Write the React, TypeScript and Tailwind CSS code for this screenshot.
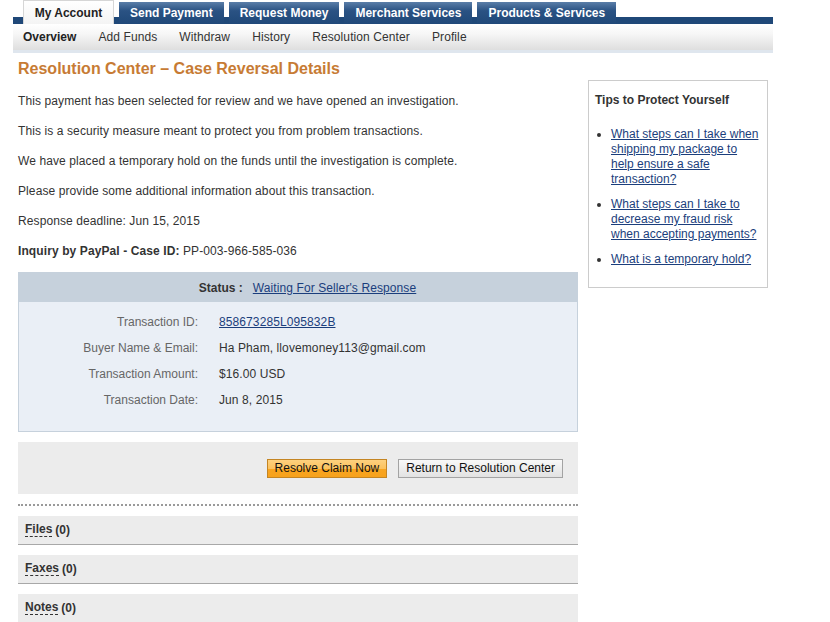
export default function App() {
  const tabs = ["Send Payment", "Request Money", "Merchant Services", "Products & Services"];
  const sub = ["Add Funds", "Withdraw", "History", "Resolution Center", "Profile"];
  const rows: [string, string, boolean][] = [
    ["Transaction ID:", "858673285L095832B", true],
    ["Buyer Name & Email:", "Ha Pham, llovemoney113@gmail.com", false],
    ["Transaction Amount:", "$16.00 USD", false],
    ["Transaction Date:", "Jun 8, 2015", false],
  ];
  const tips = [
    "What steps can I take when shipping my package to help ensure a safe transaction?",
    "What steps can I take to decrease my fraud risk when accepting payments?",
    "What is a temporary hold?",
  ];

  return (
    <div className="w-[830px] h-[622px] overflow-hidden bg-white font-['Liberation_Sans',Arial,sans-serif] text-[12px] text-[#333]">
      {/* Top nav */}
      <div className="ml-[13px] w-[760px]">
        <div className="h-[24px] flex items-end gap-[5px] pl-[10px] bg-[linear-gradient(to_bottom,transparent_17px,#1f4878_17px)]">
          <div className="h-[24px] w-[91px] flex items-center justify-center bg-[linear-gradient(to_bottom,#ffffff,#f4f4f4)] border border-b-0 border-[#d6d6d6] text-[#222] font-bold">
            My Account
          </div>
          {tabs.map((t) => (
            <div
              key={t}
              className="h-[22px] px-[11px] flex items-center justify-center bg-[linear-gradient(to_bottom,#5a7ea8,#2a5283_40%,#1f4878)] text-white font-bold"
            >
              {t}
            </div>
          ))}
        </div>
        <div className="h-[29px] flex items-center gap-[22px] pl-[10px] bg-[linear-gradient(to_bottom,#ffffff,#f6f6f6_40%,#dedede)] border-b-[3px] border-[#dfe6ee]">
          <span className="font-bold text-[#222]">Overview</span>
          {sub.map((s) => (
            <span key={s} className="text-[#333] tracking-[0.1px]">
              {s}
            </span>
          ))}
        </div>
      </div>

      <div className="flex gap-[10px] pl-[18px]">
        {/* Main column */}
        <div className="w-[560px]">
          <h1 className="mt-[6px] text-[16px] leading-[20px] font-bold text-[#c77b34]">
            Resolution Center – Case Reversal Details
          </h1>
          <div className="mt-[15px] leading-[15px] tracking-[0.1px]">
            <p className="mb-[15px]">This payment has been selected for review and we have opened an investigation.</p>
            <p className="mb-[15px]">This is a security measure meant to protect you from problem transactions.</p>
            <p className="mb-[15px]">We have placed a temporary hold on the funds until the investigation is complete.</p>
            <p className="mb-[15px]">Please provide some additional information about this transaction.</p>
            <p className="mb-[15px]">Response deadline: Jun 15, 2015</p>
            <p>
              <span className="font-bold">Inquiry by PayPal - Case ID:</span> PP-003-966-585-036
            </p>
          </div>

          {/* Status box */}
          <div className="mt-[13px] border border-[#c6d1dc] bg-[#eaeff6]">
            <div className="h-[29px] flex items-center justify-center gap-[10px] pl-[19px] bg-[#c6d1dc]">
              <span className="font-bold text-[#333]">Status :</span>
              <a href="#" className="text-[#1b3e7c] underline tracking-[0.1px]">
                Waiting For Seller's Response
              </a>
            </div>
            <div className="pt-[7px] pb-[18px]">
              {rows.map(([k, v, link]) => (
                <div key={k} className="h-[26px] flex items-center">
                  <span className="w-[179px] text-right text-[#666]">{k}</span>
                  <span className="ml-[21px] tracking-[0.1px]">
                    {link ? (
                      <a href="#" className="text-[#1b3e7c] underline">
                        {v}
                      </a>
                    ) : (
                      <span className="text-[#333]">{v}</span>
                    )}
                  </span>
                </div>
              ))}
            </div>
          </div>

          {/* Actions */}
          <div className="mt-[10px] h-[52px] bg-[#ececec] flex items-center justify-end gap-[11px] pr-[15px]">
            <button className="h-[19px] px-[7px] border border-[#c48523] bg-[linear-gradient(to_bottom,#fdd17f,#fcc25e_50%,#f8a420_50%,#f7a21c)] text-[#111] leading-[17px]">
              Resolve Claim Now
            </button>
            <button className="h-[19px] px-[7px] border border-[#a3a3a3] bg-[linear-gradient(to_bottom,#f8f8f8,#e2e2e2)] text-[#111] leading-[17px]">
              Return to Resolution Center
            </button>
          </div>

          <div className="mt-[10px] border-t-2 border-dotted border-[#9a9a9a]" />

          {["Files", "Faxes", "Notes"].map((s) => (
            <div
              key={s}
              className="mt-[10px] first-of-type:mt-[9px] h-[29px] flex items-center pl-[7px] bg-[#ececec] border-b border-[#a8a8a8]"
            >
              <span className="font-bold text-[#333] border-b border-dashed border-[#333] leading-[13px]">{s}</span>
              <span className="ml-[3px] font-bold text-[#333]">(0)</span>
            </div>
          ))}
        </div>

        {/* Sidebar */}
        <div className="mt-[27px] w-[180px] h-[208px] border border-[#cccccc] pl-[6px] pr-[5px] pt-[12px]">
          <div className="font-bold text-[#333] leading-[15px]">Tips to Protect Yourself</div>
          <ul className="mt-[19px] list-disc pl-[16px] leading-[15px] marker:text-[#333]">
            {tips.map((t) => (
              <li key={t} className="mb-[10px]">
                <a href="#" className="text-[#1b3e7c] underline">
                  {t}
                </a>
              </li>
            ))}
          </ul>
        </div>
      </div>
    </div>
  );
}
